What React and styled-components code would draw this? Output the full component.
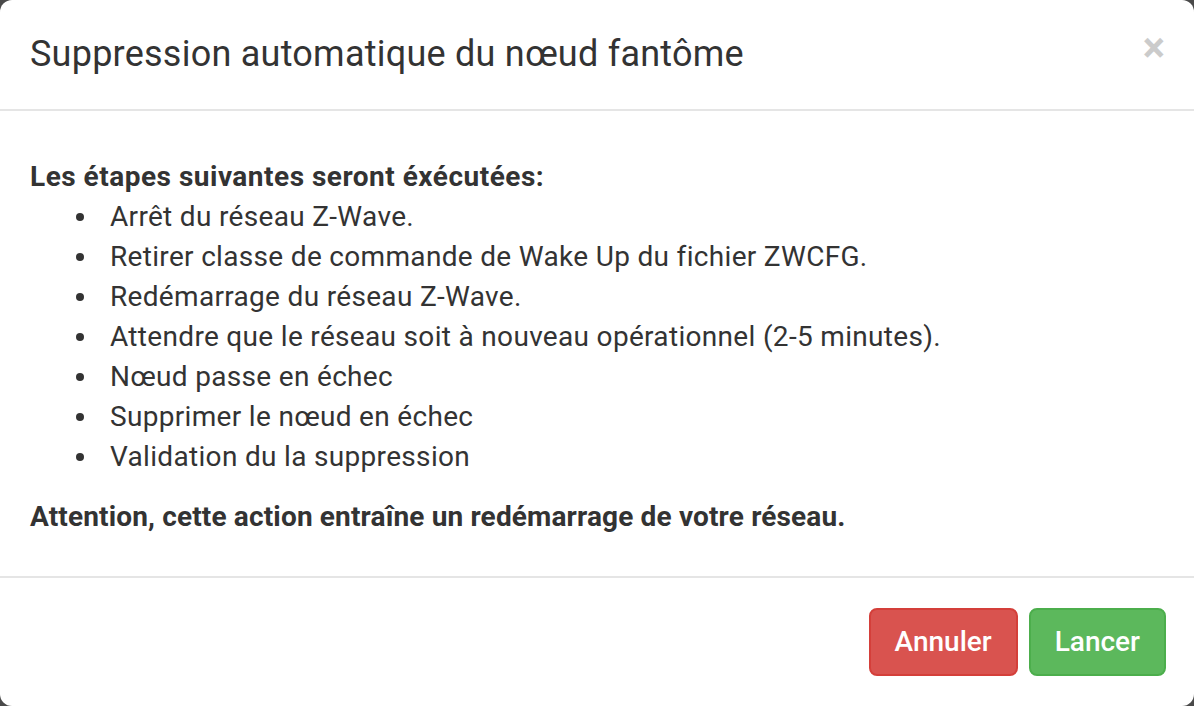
import styled, { createGlobalStyle } from "styled-components";

const Global = createGlobalStyle`
    html, body {
        margin: 0;
        padding: 0;
        background: #4a4a4a;
    }
    body {
        font-family: Roboto, "Liberation Sans", sans-serif;
        color: #333;
    }
`;

const Modal = styled.div`
    width: 1194px;
    height: 706px;
    box-sizing: border-box;
    background: #fff;
    border-radius: 12px;
    display: flex;
    flex-direction: column;
    overflow: hidden;
`;

const Header = styled.div`
    display: flex;
    align-items: center;
    justify-content: space-between;
    padding: 29px 29px 29px 30px;
    border-bottom: 2px solid #e5e5e5;
`;

const Title = styled.h4`
    margin: 0;
    font-size: 36px;
    font-weight: 400;
    line-height: 51px;
    letter-spacing: 0.24px;
    color: #333;
`;

const Close = styled.button`
    border: 0;
    background: transparent;
    padding: 0;
    font-family: inherit;
    font-size: 42px;
    font-weight: 700;
    line-height: 1;
    color: #000;
    opacity: 0.2;
    margin-top: -14px;
    cursor: pointer;
`;

const Body = styled.div`
    padding: 46px 30px 39px;
    font-size: 28px;
    line-height: 40px;
    letter-spacing: 0.32px;
`;

const Strong = styled.b`
    display: block;
    font-weight: 700;
    letter-spacing: ${p => (p.$wide ? "0.5px" : "0.15px")};
`;

const Steps = styled.ul`
    margin: 0 0 20px;
    padding-left: 80px;
    list-style: none;
`;

const Step = styled.li`
    position: relative;

    &::before {
        content: "";
        position: absolute;
        left: -34px;
        top: 16px;
        width: 8px;
        height: 8px;
        border-radius: 50%;
        background: #333;
    }
`;

const Footer = styled.div`
    display: flex;
    justify-content: flex-end;
    gap: 11px;
    padding: 30px 28px;
    border-top: 2px solid #e5e5e5;
`;

const Button = styled.button`
    font-family: inherit;
    font-size: 28px;
    line-height: 40px;
    font-weight: 500;
    padding: 12px 24px;
    border-radius: 8px;
    color: #fff;
    border: 2px solid ${p => (p.$kind === "danger" ? "#d43f3a" : "#4cae4c")};
    background: ${p => (p.$kind === "danger" ? "#d9534f" : "#5cb85c")};
    cursor: pointer;
`;

const steps = [
    "Arrêt du réseau Z-Wave.",
    "Retirer classe de commande de Wake Up du fichier ZWCFG.",
    "Redémarrage du réseau Z-Wave.",
    "Attendre que le réseau soit à nouveau opérationnel (2-5 minutes).",
    "Nœud passe en échec",
    "Supprimer le nœud en échec",
    "Validation du la suppression",
];

export default function App() {
    return (
        <>
            <Global />
            <Modal>
                <Header>
                    <Title>Suppression automatique du nœud fantôme</Title>
                    <Close>×</Close>
                </Header>
                <Body>
                    <Strong $wide>Les étapes suivantes seront éxécutées:</Strong>
                    <Steps>
                        {steps.map(s => (
                            <Step key={s}>{s}</Step>
                        ))}
                    </Steps>
                    <Strong>Attention, cette action entraîne un redémarrage de votre réseau.</Strong>
                </Body>
                <Footer>
                    <Button $kind="danger">Annuler</Button>
                    <Button $kind="success">Lancer</Button>
                </Footer>
            </Modal>
        </>
    );
}
